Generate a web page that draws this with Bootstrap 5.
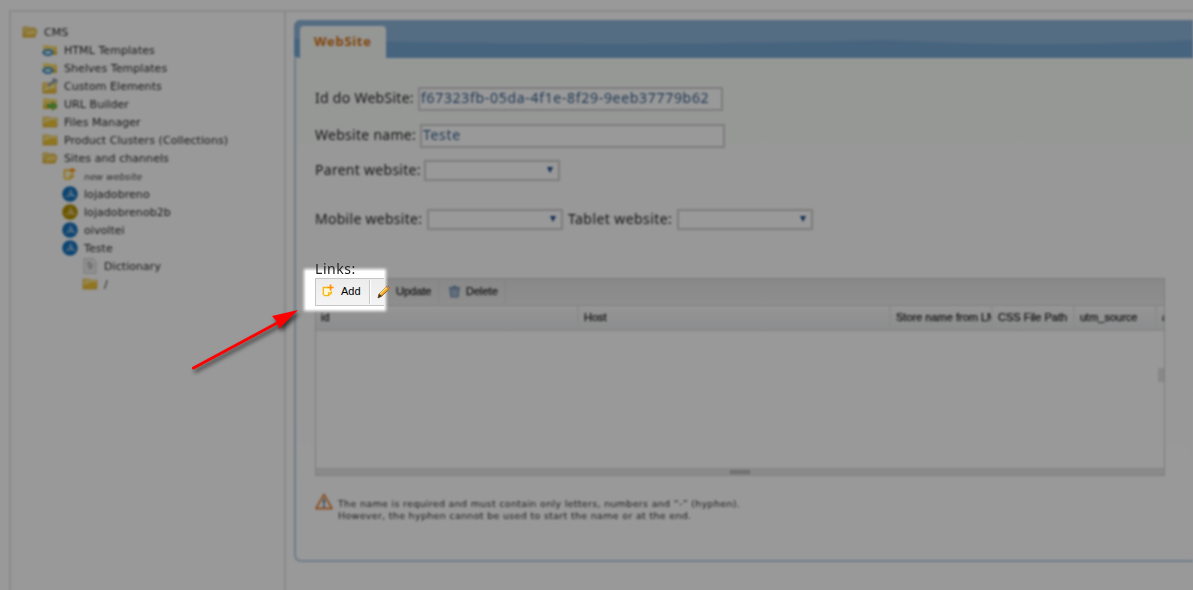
<!DOCTYPE html>
<html lang="en">
<head>
<meta charset="utf-8">
<meta name="viewport" content="width=device-width, initial-scale=1">
<title>CMS - WebSite</title>
<link href="https://cdn.jsdelivr.net/npm/bootstrap@5.3.0/dist/css/bootstrap.min.css" rel="stylesheet">
<style>
body{background:#999;overflow:hidden;height:590px;font-family:"DejaVu Sans",sans-serif}
svg{display:block;flex:none}
.stage{height:590px;background:#fff;filter:brightness(.6)}
.soft{height:590px;padding:10px 0 0 9px;filter:blur(.8px)}
.frame{height:590px;border:2px solid #e6e6e6;border-right:0}
.tree{width:275px;flex:none;border-right:2px solid #e4e4e4;padding:12px 0 0 11px;font-size:11px;letter-spacing:.06px;color:#2a2a2a}
.tree li{display:flex;align-items:center;height:18px;gap:6px;white-space:nowrap;line-height:18px}
.tree li svg{width:16px;height:16px;margin-top:-2px}
.lv1{padding-left:20px}.lv2{padding-left:40px}.lv3{padding-left:60px}
.tree .new-site{font-size:9.2px;font-style:italic;color:#444;line-height:16px;padding-bottom:1px}
.panel{margin:8px 0 0 8px;height:542px;border:1px solid #b9cfe2;border-width:0 0 2px 2px;border-radius:7px 0 0 7px;background:linear-gradient(#fafdfa,#fcfefc 60%,#fff 85%);font-family:"Noto Sans",sans-serif;font-size:14px;letter-spacing:.28px;color:#222}
.tabbar{height:38px;margin-left:-2px;padding:6px 0 0 6px;border-radius:7px 0 0 5px;overflow:hidden;position:relative;background:#76a7d4}
.tabbar>svg{position:absolute;left:0;top:0}
.site-tab{position:relative;width:86px;height:32px;border-radius:4px 4px 0 0;background:#f9fcf9;color:#d97512;font-weight:700;font-size:13px;line-height:31px;padding-left:14px;letter-spacing:.7px}
.form-area{padding:29px 0 0 19px}
.line{display:flex;align-items:center;white-space:nowrap}
.line label{position:relative;top:-1px}
.line .up{top:-2px}
.box{border:2px solid #d0d0d0;background:#fff;height:24px;width:305px;color:#365f8c;line-height:18px;padding-left:1px;letter-spacing:.69px}
.pick{border:2px solid #d0d0d0;background:#fff;height:21px;width:136px;display:flex;align-items:center;justify-content:flex-end;padding:0 5px 1px 0}
.links-grid{width:850px;height:198px;margin-top:47px;border:1px solid #d0d0d0;background:#fff;font-family:"Liberation Sans",sans-serif;font-size:11px;letter-spacing:0;-webkit-text-stroke:.25px}
.tools{height:27px;padding-left:54px;background:linear-gradient(#e4e4e4,#ededed);border-bottom:1px solid #d8d8d8}
.tools>div{height:25px;border-right:1px solid #d9d9d9;display:flex;align-items:center}
.heads{height:25px;background:linear-gradient(#fafafa,#f3f3f3 40%,#e9ebed);border-bottom:1px solid #ddd;line-height:23px;overflow:hidden}
.heads>div{flex:none;border-right:2px solid #e9e9e9;padding-left:5px;overflow:hidden;white-space:nowrap}
.rows{height:137px;position:relative}
.grip{position:absolute;right:0;top:37px;width:6px;height:14px;background:#e2e2e2}
.foot{height:7px;background:#e6e6e6;border-top:1px solid #ddd}
.foot>i{display:block;width:20px;height:4px;margin:1px 0 0 414px;background:#bcbcbc}
.hint{margin-top:17px;font-family:"DejaVu Sans",sans-serif;font-size:9.5px;line-height:12px;letter-spacing:.31px;color:#333}
.spot{position:absolute;left:306px;top:271px;width:78px;height:38px;background:#fff;box-shadow:0 0 3px 2px #fff;padding:7px 0 0 9px}
.spot-tools{height:28px;border:1px solid #c6c6c6;border-right:0;background:linear-gradient(#ececec,#f4f4f4);font:11px "Liberation Sans",sans-serif;color:#000}
.spot-tools .cell{flex:none;width:54px;border-right:1px solid #c6c6c6;height:24px;padding:0 0 2px 6px;box-shadow:1px 0 #fff}
.links-label{position:absolute;left:315px;top:259px;font:14px/20px "Noto Sans",sans-serif;letter-spacing:.55px;color:#222}
.pointer{position:absolute;left:180px;top:295px;filter:drop-shadow(2px 3px 2px rgba(0,0,0,.65))}
</style>
</head>
<body>
<svg width="0" height="0" class="position-absolute">
<defs>
<linearGradient id="gold" x1="0" y1="0" x2="0" y2="1"><stop stop-color="#ffe98a"/><stop offset="1" stop-color="#e8b52b"/></linearGradient>
<symbol id="folder" viewBox="0 0 16 16"><path d="M1 3h6l1 1h7v9H1z" fill="url(#gold)" stroke="#dfb13d" stroke-width=".8"/><path d="M2 12L3 9c3 0 4-3 6-3h5v6z" fill="#f0c535"/><path d="M2 8c4 0 4-3 7-3h5" fill="none" stroke="#fff5b8"/></symbol>
<symbol id="open" viewBox="0 0 16 16"><path d="M1 13V3h5l1 1h6v3" fill="#f7dc7b" stroke="#dcb44c"/><path d="M1 13L4 6h11l-2 7z" fill="url(#gold)" stroke="#d9ac36"/><path d="M5 10c3 0 4-2 8-2" fill="none" stroke="#fff1a0"/></symbol>
<symbol id="code" viewBox="0 0 16 16"><path d="M1 3h6l1 1h7v9H1z" fill="url(#gold)"/><path d="M1 10.500L4 8h4l3 2.500-3 2.500H4z" fill="#d9e6dd" stroke="#3f94d4" stroke-width="2"/></symbol>
<symbol id="tool" viewBox="0 0 16 16"><path d="M1 5h13v10H1z" fill="url(#gold)" stroke="#dfae35"/><path d="M2 12c3 0 4-3 7-3h4" fill="none" stroke="#fff1a0" stroke-width="2"/><path d="M6 8l6-5" stroke="#6f96c4" stroke-width="2"/><path d="M11 0l4 1 1 3-3 1-3-2z" fill="#98a3ad"/></symbol>
<symbol id="send" viewBox="0 0 16 16"><path d="M1 2h6l1 1h7v10H1z" fill="url(#gold)"/><path d="M5 8h5V5l6 5-6 5v-3H5z" fill="#64b545"/></symbol>
<symbol id="add" viewBox="0 0 14 14"><path d="M7 3.500H1.500v8L3 13h4.500l3.500-3V8" fill="#fff8d3" stroke="#f5b514" stroke-width="1.500"/><path d="M7.500 12.500V9.500H11" fill="none" stroke="#f5b514" stroke-width="1.200"/><path d="M10 0v7M6.500 3.500h7" stroke="#ff9200" stroke-width="2"/></symbol>
<symbol id="site" viewBox="0 0 16 16"><circle cx="8" cy="8" r="7.800" fill="currentColor"/><path d="M8.500 2l2 4 3.500 5.500-5.500-1.500-6 2 4-5z" fill="#fff" opacity=".3"/><path d="M9 3l1 5 4 3-5-1-5 2 4-3z" fill="#fff" opacity=".3"/></symbol>
<symbol id="doc" viewBox="0 0 16 16"><path d="M2 .500h9l3 3v12H2z" fill="#f0f0f0" stroke="#ccc"/><path d="M5 4.500h4M5 6.500h6M6 8.500h5M6 10.500h4" stroke="#999"/></symbol>
<symbol id="pencil" viewBox="0 0 14 14"><path d="M1 13l1-4L10 1l3 2-8 8z" fill="#f6a51c" stroke="#7d5527" stroke-width=".8"/><path d="M3 9l7-7" stroke="#ffe083" stroke-width="1.300"/><path d="M10 1l3 2-1 2-3-3z" fill="#c47e58"/><path d="M1 13l1-4 3 2z" fill="#4a2f22"/></symbol>
<symbol id="bin" viewBox="0 0 14 14"><path d="M1 3h12M5 1.500h4" stroke="#7590ad" stroke-width="1.500"/><path d="M2 4h10l-1 9H3z" fill="#8fa8c3" stroke="#728dab"/><path d="M5 5v7M7 5v7M9 5v7" stroke="#c3d3e3" stroke-width=".8"/></symbol>
<symbol id="caret" viewBox="0 0 6 6"><path d="M0 0h6L3 6z" fill="#1f4f8c"/></symbol>
</defs>
</svg>

<div class="stage">
<div class="soft">
 <div class="frame d-flex">
  <ul class="tree list-unstyled mb-0">
   <li><svg><use href="#open"/></svg>CMS</li>
   <li class="lv1"><svg><use href="#code"/></svg>HTML Templates</li>
   <li class="lv1"><svg><use href="#code"/></svg>Shelves Templates</li>
   <li class="lv1"><svg><use href="#tool"/></svg>Custom Elements</li>
   <li class="lv1"><svg><use href="#send"/></svg>URL Builder</li>
   <li class="lv1"><svg><use href="#folder"/></svg>Files Manager</li>
   <li class="lv1"><svg><use href="#folder"/></svg>Product Clusters (Collections)</li>
   <li class="lv1"><svg><use href="#open"/></svg>Sites and channels</li>
   <li class="lv2 new-site"><svg viewBox="-1 1 16 16"><use href="#add" width="13" height="13"/></svg>new website</li>
   <li class="lv2"><svg color="#1673bd"><use href="#site"/></svg>lojadobreno</li>
   <li class="lv2"><svg color="#b59200"><use href="#site"/></svg>lojadobrenob2b</li>
   <li class="lv2"><svg color="#1673bd"><use href="#site"/></svg>oivoltei</li>
   <li class="lv2"><svg color="#1673bd"><use href="#site"/></svg>Teste</li>
   <li class="lv3"><svg><use href="#doc"/></svg>Dictionary</li>
   <li class="lv3"><svg><use href="#folder"/></svg>/</li>
  </ul>
  <div class="flex-grow-1">
   <div class="panel">
    <div class="tabbar">
     <svg width="900" height="38"><path d="M0 0H900V20Q745 28 590 20Q300 28 0 19z" fill="#8eb5d9"/></svg>
     <div class="site-tab">WebSite</div>
    </div>
    <div class="form-area">
     <div class="line"><label class="up" style="width:103px">Id do WebSite:</label><div class="box">f67323fb-05da-4f1e-8f29-9eeb37779b62</div></div>
     <div class="line" style="margin-top:13px"><label class="up" style="width:105px">Website name:</label><div class="box">Teste</div></div>
     <div class="line" style="margin-top:12px"><label style="width:109px">Parent website:</label><div class="pick"><svg width="6" height="6"><use href="#caret"/></svg></div></div>
     <div class="line" style="margin-top:28px"><label style="width:112px">Mobile website:</label><div class="pick"><svg width="6" height="6"><use href="#caret"/></svg></div><label style="width:114px;padding-left:5px;letter-spacing:.42px">Tablet website:</label><div class="pick"><svg width="6" height="6"><use href="#caret"/></svg></div></div>
     <div class="links-grid" style="margin-top:48px">
      <div class="tools d-flex">
       <div style="width:69px;padding-left:7px;gap:5px"><svg width="14" height="14" style="visibility:hidden"><use href="#pencil"/></svg>Update</div>
       <div style="width:67px;padding-left:9px;gap:5px"><svg width="13" height="13"><use href="#bin"/></svg>Delete</div>
      </div>
      <div class="heads d-flex">
       <div style="width:263px">id</div><div style="width:312px">Host</div><div style="width:102px">Store name from LM</div><div style="width:82px">CSS File Path</div><div style="width:82px">utm_source</div><div style="width:20px">active</div>
      </div>
      <div class="rows"><span class="grip"></span></div>
      <div class="foot"><i></i></div>
     </div>
     <div class="hint d-flex">
      <svg width="18" height="17" viewBox="0 0 18 17"><path d="M9 1.5L17 15.5H1z" fill="none" stroke="#e5853e" stroke-width="1.8" stroke-linejoin="round"/><path d="M9 6v5M9 12v2" stroke="#45688c" stroke-width="1.8"/></svg>
      <div style="padding:5px 0 0 5px">The name is required and must contain only letters, numbers and “-” (hyphen).<br>However, the hyphen cannot be used to start the name or at the end.</div>
     </div>
    </div>
   </div>
  </div>
 </div>
</div>
</div>

<div class="spot">
 <div class="spot-tools d-flex align-items-center">
  <div class="cell d-flex align-items-center"><svg width="12" height="13" style="margin:0 7px 1px 0"><use href="#add"/></svg>Add</div>
  <svg width="14" height="14" style="margin:0 -8px 1px 7px"><use href="#pencil"/></svg>
 </div>
</div>
<div class="links-label">Links:</div>
<svg class="pointer" width="125" height="85"><path d="M13.500 73L99 27" stroke="#f00" stroke-width="3" stroke-linecap="round"/><path d="M118 15L99 34L98 28L92 21z" fill="#f00"/></svg>
<script src="https://cdn.jsdelivr.net/npm/bootstrap@5.3.0/dist/js/bootstrap.bundle.min.js"></script>
</body>
</html>
